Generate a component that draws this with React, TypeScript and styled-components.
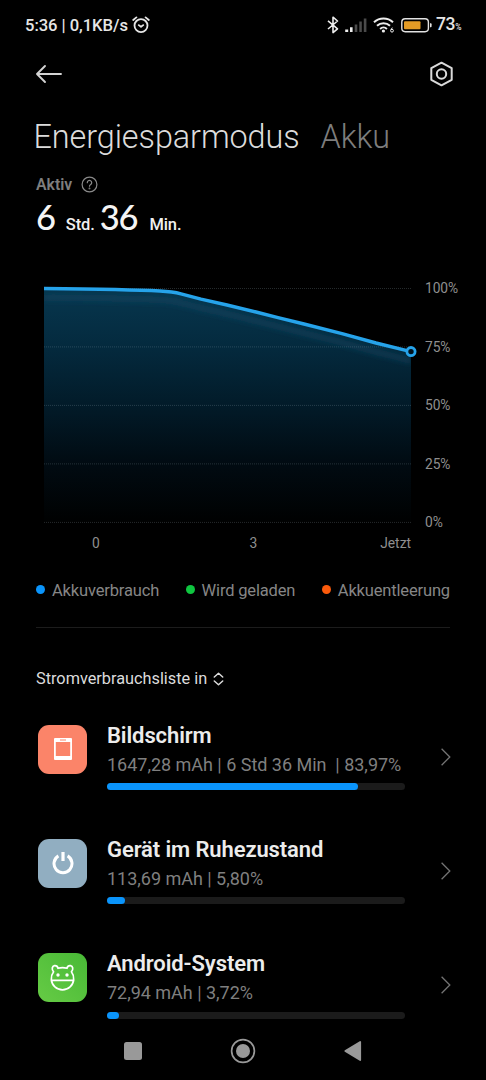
import React from 'react';
import styled, { createGlobalStyle } from 'styled-components';

const GlobalStyle = createGlobalStyle`
  * { box-sizing: border-box; }
  body { margin: 0; background: #000; }
  svg { display: block; flex: none; }
`;

const Screen = styled.main`
  width: 486px;
  height: 1080px;
  overflow: hidden;
  display: flex;
  flex-direction: column;
  background: #000;
  color: #e6e6e6;
  font-family: Roboto, 'Liberation Sans', sans-serif;
`;

const StatusBar = styled.header`
  display: flex;
  align-items: center;
  justify-content: space-between;
  height: 50px;
  padding: 0 25px;
`;

const StatusGroup = styled.div<{ $gap?: number }>`
  display: flex;
  align-items: center;
  gap: ${(p) => p.$gap ?? 0}px;
`;

const StatusText = styled.span`
  padding-top: 1px;
  font-size: 16.6px;
  font-weight: 480;
  line-height: 20px;
  letter-spacing: -0.05px;
  white-space: pre;
`;

const BatteryText = styled(StatusText)`
  margin-left: -2px;
  font-size: 17.5px;
  letter-spacing: -0.4px;
  small { font-size: 8.5px; font-weight: 500; }
`;

const AppBar = styled.nav`
  display: flex;
  align-items: center;
  justify-content: space-between;
  height: 48px;
  padding: 0 32px 0 35px;
`;

const IconButton = styled.button`
  display: flex;
  padding: 0;
  border: 0;
  background: none;
`;

const Tabs = styled.div`
  display: flex;
  gap: 21px;
  height: 40px;
  margin-top: 19px;
  padding-left: 33.5px;
`;

const Tab = styled.h1<{ $active?: boolean }>`
  margin: 0;
  font-size: 32.4px;
  font-weight: ${(p) => (p.$active ? 280 : 300)};
  line-height: 40px;
  letter-spacing: -0.08px;
  color: ${(p) => (p.$active ? '#dcdcdc' : '#7d7d7d')};
`;

const Uptime = styled.section`
  height: 81px;
  padding: 17px 36px 0;
`;

const UptimeLabel = styled.div`
  display: flex;
  align-items: center;
  gap: 9px;
  height: 20px;
  font-size: 15.8px;
  font-weight: 600;
  color: #7e7e7e;
`;

const Duration = styled.div`
  display: flex;
  align-items: baseline;
  height: 40px;
  margin-top: 3px;
  line-height: 40px;
`;

const BigNumber = styled.span`
  font-family: Lato, sans-serif;
  font-size: 34.5px;
  font-weight: 500;
  letter-spacing: -1.2px;
  color: #f4f4f4;
`;

const Unit = styled.span<{ $left: number; $right?: number }>`
  margin: 0 ${(p) => p.$right ?? 0}px 0 ${(p) => p.$left}px;
  font-size: 16.5px;
  font-weight: 550;
  letter-spacing: -0.1px;
  color: #f0f0f0;
`;

const ChartArea = styled.section`
  display: grid;
  grid-template-columns: 376px 1fr;
  height: 284px;
  margin: 32px 0 0 43px;
`;

const Percents = styled.div`
  display: flex;
  flex-direction: column;
  justify-content: space-between;
  height: 254px;
  margin-top: 8px;
  padding-left: 6px;
  font-size: 13.8px;
  line-height: 20px;
  letter-spacing: -0.1px;
  color: #8f8f8f;
`;

const Plot = styled.div`
  display: flex;
  flex-direction: column;
`;

const Hours = styled.div`
  display: grid;
  grid-template-columns: 106px 209px 53px;
  width: 368px;
  margin-top: 1px;
  text-align: center;
  font-size: 13.8px;
  line-height: 20px;
  color: #8f8f8f;
  span:last-child { text-align: right; }
`;

const Legend = styled.ul`
  display: flex;
  justify-content: space-between;
  height: 20px;
  margin: 27px 36px 0;
  padding: 0;
  list-style: none;
`;

const LegendItem = styled.li<{ $color: string }>`
  display: flex;
  align-items: center;
  gap: 7px;
  font-size: 16.5px;
  line-height: 20px;
  letter-spacing: -0.16px;
  color: #868686;
  &::before {
    content: '';
    width: 9px;
    height: 9px;
    margin-top: -4px;
    border-radius: 50%;
    background: ${(p) => p.$color};
  }
`;

const Divider = styled.hr`
  flex: none;
  width: 414px;
  height: 1px;
  margin: 26px 36px 0;
  border: 0;
  background: #1c1c1c;
`;

const ListHeading = styled.div`
  display: flex;
  align-items: center;
  gap: 6px;
  height: 20px;
  margin: 41px 36px 0;
  font-size: 16.3px;
  line-height: 20px;
  color: #dcdcdc;
  svg { margin-top: -1px; }
`;

const Consumers = styled.div`
  display: flex;
  flex-direction: column;
  flex: none;
  height: 303.5px;
  margin-top: 33.5px;
`;

const Row = styled.article`
  display: grid;
  flex: none;
  grid-template-columns: 49px 298px 26px;
  column-gap: 20px;
  justify-content: start;
  height: 114.3px;
  padding-left: 38px;
  > :last-child { margin: 25px 0 0 16px; }
`;

const Tile = styled.div<{ $background: string }>`
  display: grid;
  place-items: center;
  width: 49px;
  height: 49px;
  margin-top: 2px;
  border-radius: 11px;
  background: ${(p) => p.$background};
`;

const Name = styled.h2`
  margin: 0;
  font-size: 22px;
  font-weight: 600;
  line-height: 26px;
  letter-spacing: -0.1px;
  color: #ececec;
  white-space: nowrap;
`;

const Details = styled.p`
  margin: 4px 0 0;
  font-size: 18px;
  line-height: 24px;
  letter-spacing: -0.02px;
  color: #7f7f7f;
  white-space: pre;
`;

const Track = styled.div`
  height: 7px;
  margin-top: 6.5px;
  border-radius: 4px;
  background: #1b1b1b;
`;

const Fill = styled.div`
  height: 7px;
  border-radius: 4px;
  background: #0a94fb;
`;

const SystemNav = styled.footer`
  display: flex;
  flex: none;
  justify-content: space-between;
  align-items: center;
  height: 54px;
  padding: 0 124px;
  margin-top: -2px;
`;

const AlarmIcon = () => (
  <svg width="18" height="18" viewBox="0 0 18 18" fill="none" stroke="#e6e6e6" strokeWidth="1.8" strokeLinecap="round" strokeLinejoin="round">
    <circle cx="9" cy="9.6" r="6.5" />
    <path d="M1.2 4 4.4 1.4M16.8 4 13.6 1.4M6.8 9.1 9 10.8l2.2-1.7" />
  </svg>
);

const BluetoothIcon = () => (
  <svg width="12" height="18" viewBox="0 0 12 18" fill="none" stroke="#ededed" strokeWidth="1.6" strokeLinejoin="round">
    <path d="M1 4.9 10.5 12.8 6 16.6V1.2L10.5 5 1 13" />
  </svg>
);

const SignalIcon = () => (
  <svg width="22" height="15" viewBox="0 0 22 15">
    <path fill="#ededed" d="M.2 11.5h3V14h-3zM5 9.3h2.6V14H5z" />
    <path fill="#4b4b4b" d="M9.7 6.4h2.6V14H9.7zM14.3 3.4h2.5V14h-2.5zM18.8.6h2.6V14h-2.6z" />
  </svg>
);

const WifiIcon = () => (
  <svg width="22" height="18" viewBox="0 0 22 18" fill="none" stroke="#ededed" strokeWidth="2">
    <path d="M1 6.3a14 14 0 0 1 19 0M4 9.7a9.5 9.5 0 0 1 13 0M7.1 12.9a5 5 0 0 1 6.8 0" />
    <circle cx="10.4" cy="15" r="1.6" fill="#ededed" stroke="none" />
    <path d="M19.3 11.6 17.9 14" strokeWidth="1" />
    <circle cx="19" cy="14.7" r="1.4" strokeWidth="1" />
  </svg>
);

const BatteryIcon = () => (
  <svg width="31" height="15" viewBox="0 0 31 15">
    <rect x=".8" y=".8" width="26.6" height="12.9" rx="3.4" fill="none" stroke="#e2e2e2" strokeWidth="1.4" />
    <rect x="3" y="3.2" width="16.5" height="8" rx="1" fill="#e39b25" />
    <path d="M29 5.2h.7c.6 0 .9.5.9 1v2c0 .6-.3 1-.9 1H29z" fill="#e2e2e2" />
  </svg>
);

const BackArrow = () => (
  <svg width="28" height="20" viewBox="0 0 28 20" fill="none" stroke="#d4d4d4" strokeWidth="1.9" strokeLinecap="round" strokeLinejoin="round">
    <path d="M26 10H2M10 2 2 10l8 8" />
  </svg>
);

const SettingsIcon = () => (
  <svg width="25" height="26" viewBox="0 0 25 26" fill="none" stroke="#dadada" strokeWidth="2" strokeLinejoin="round">
    <path d="M12.5 1.7 22.7 7.2V18.8L12.5 24.3 2.3 18.8V7.2Z" />
    <circle cx="12.5" cy="13" r="4.7" />
  </svg>
);

const HelpIcon = () => (
  <svg width="17" height="17" viewBox="0 0 17 17" fill="none" stroke="#8a8a8a" strokeWidth="1.2" strokeLinecap="round">
    <circle cx="8.5" cy="8.5" r="7.4" />
    <path d="M6.3 6.7a2.2 2.2 0 1 1 3.4 1.8c-.8.5-1.2.8-1.2 1.7" />
    <circle cx="8.5" cy="12.4" r=".35" />
  </svg>
);

const linePath = 'M1 18.5C50 19 90 19.6 117 21C126 21.4 132 22.2 138 23.8L158 29.2L184 35L213 42L235 47.6L261 54L299 63.6L333 73L368 81.6';

const Chart = () => (
  <svg width="376" height="262" viewBox="0 0 376 262" fill="none">
    <defs>
      <linearGradient id="area" x1="0" y1="18" x2="0" y2="252" gradientUnits="userSpaceOnUse">
        <stop offset="0" stopColor="#07374f" />
        <stop offset="0.25" stopColor="#042a3e" />
        <stop offset="0.5" stopColor="#021b29" />
        <stop offset="0.75" stopColor="#010b12" />
        <stop offset="1" stopColor="#000101" />
      </linearGradient>
      <filter id="glow" x="-10%" y="-30%" width="120%" height="160%">
        <feGaussianBlur stdDeviation="2.5" />
      </filter>
      <clipPath id="inside">
        <path d={`${linePath}V252H1Z`} />
      </clipPath>
    </defs>
    <path d={`${linePath}V252H1Z`} fill="url(#area)" />
    <g clipPath="url(#inside)">
      <path d={linePath} stroke="#124a68" strokeOpacity=".4" strokeWidth="7" filter="url(#glow)" transform="translate(0 9)" />
    </g>
    <path d="M1 18.5H368M1 76.9H368M1 135.4H368M1 193.9H368M1 252.4H368" stroke="#9cafb8" strokeOpacity=".24" strokeDasharray="1 1" />
    <path d={linePath} stroke="#26a3ea" strokeWidth="3.4" strokeLinejoin="round" />
    <circle cx="368" cy="81.6" r="4.1" fill="#00121d" stroke="#26a3ea" strokeWidth="2.8" />
  </svg>
);

const SortIcon = () => (
  <svg width="11" height="14" viewBox="0 0 11 14" fill="none" stroke="#dcdcdc" strokeWidth="1.5" strokeLinejoin="round" strokeLinecap="round">
    <path d="M1.3 5 5.5 1.3 9.7 5M1.3 9 5.5 12.7 9.7 9" />
  </svg>
);

const Chevron = () => (
  <svg width="10" height="18" viewBox="0 0 10 18" fill="none" stroke="#747474" strokeWidth="1.3">
    <path d="M.6.8 8.8 9 .6 17.2" />
  </svg>
);

const ScreenGlyph = () => (
  <svg width="18" height="22" viewBox="0 0 18 22">
    <path fill="#fff" fillRule="evenodd" d="M1 0H17Q18 0 18 1V21Q18 22 17 22H1Q0 22 0 21V1Q0 0 1 0ZM1.8 4V18H16.2V4ZM6 1.4V2.5H12V1.4Z" />
  </svg>
);

const PowerGlyph = () => (
  <svg width="22" height="24" viewBox="0 0 22 24" fill="none" stroke="#fff">
    <path strokeWidth="3" d="M6.4 4.9A9 9 0 1 0 15.6 4.9" />
    <path strokeWidth="3.2" d="M11 1V10" />
  </svg>
);

const AndroidGlyph = () => (
  <svg width="27" height="29" viewBox="0 0 27 29" fill="none" stroke="#fff" strokeWidth="1.7" strokeLinecap="round" strokeLinejoin="round">
    <path d="M4.6 8.8C2.3 6.4 3.1 3.1 5.5 2.7 7.3 2.5 8.6 3.6 9 5.3Q13.5 3.9 18 5.3C18.4 3.6 19.7 2.5 21.5 2.7 23.9 3.1 24.7 6.4 22.4 8.8A11.2 11.2 0 1 1 4.6 8.8ZM2.3 17.4H24.7" />
    <circle cx="9" cy="12" r="1.7" fill="#fff" stroke="none" />
    <circle cx="18" cy="12" r="1.7" fill="#fff" stroke="none" />
  </svg>
);

const consumers = [
  { name: 'Bildschirm', details: '1647,28 mAh | 6 Std 36 Min  | 83,97%', fill: 84.2, background: '#fb8469', glyph: <ScreenGlyph /> },
  { name: 'Gerät im Ruhezustand', details: '113,69 mAh | 5,80%', fill: 6, background: '#91aec1', glyph: <PowerGlyph /> },
  { name: 'Android-System', details: '72,94 mAh | 3,72%', fill: 4, background: 'linear-gradient(45deg, #66cb45, #48b936)', glyph: <AndroidGlyph /> },
];

export default function App() {
  return (
    <Screen>
      <GlobalStyle />
      <StatusBar>
        <StatusGroup $gap={4}>
          <StatusText>5:36 | 0,1KB/s</StatusText>
          <AlarmIcon />
        </StatusGroup>
        <StatusGroup $gap={6}>
          <BluetoothIcon />
          <SignalIcon />
          <WifiIcon />
          <BatteryIcon />
          <BatteryText>73<small>%</small></BatteryText>
        </StatusGroup>
      </StatusBar>
      <AppBar>
        <IconButton aria-label="Zurück"><BackArrow /></IconButton>
        <IconButton aria-label="Einstellungen"><SettingsIcon /></IconButton>
      </AppBar>
      <Tabs>
        <Tab $active>Energiesparmodus</Tab>
        <Tab>Akku</Tab>
      </Tabs>
      <Uptime>
        <UptimeLabel>Aktiv<HelpIcon /></UptimeLabel>
        <Duration>
          <BigNumber>6</BigNumber>
          <Unit $left={11} $right={5}>Std.</Unit>
          <BigNumber>36</BigNumber>
          <Unit $left={12}>Min.</Unit>
        </Duration>
      </Uptime>
      <ChartArea>
        <Plot>
          <Chart />
          <Hours><span>0</span><span>3</span><span>Jetzt</span></Hours>
        </Plot>
        <Percents>
          <span>100%</span><span>75%</span><span>50%</span><span>25%</span><span>0%</span>
        </Percents>
      </ChartArea>
      <Legend>
        <LegendItem $color="#0a94fb">Akkuverbrauch</LegendItem>
        <LegendItem $color="#0fc640">Wird geladen</LegendItem>
        <LegendItem $color="#fb5a0b">Akkuentleerung</LegendItem>
      </Legend>
      <Divider />
      <ListHeading>Stromverbrauchsliste in<SortIcon /></ListHeading>
      <Consumers>
        {consumers.map((c) => (
          <Row key={c.name}>
            <Tile $background={c.background}>{c.glyph}</Tile>
            <div>
              <Name>{c.name}</Name>
              <Details>{c.details}</Details>
              <Track><Fill style={{ width: `${c.fill}%` }} /></Track>
            </div>
            <Chevron />
          </Row>
        ))}
      </Consumers>
      <SystemNav>
        <svg width="18" height="18"><rect width="18" height="18" rx="2.5" fill="#999" /></svg>
        <svg width="26" height="26" viewBox="0 0 26 26">
          <circle cx="13" cy="13" r="11.4" fill="none" stroke="#999" strokeWidth="1.7" />
          <circle cx="13" cy="13" r="7" fill="#999" />
        </svg>
        <svg width="18" height="22" viewBox="0 0 18 22">
          <path d="M1.3 11 16.2 2V20Z" fill="#999" stroke="#999" strokeWidth="1.8" strokeLinejoin="round" />
        </svg>
      </SystemNav>
    </Screen>
  );
}
